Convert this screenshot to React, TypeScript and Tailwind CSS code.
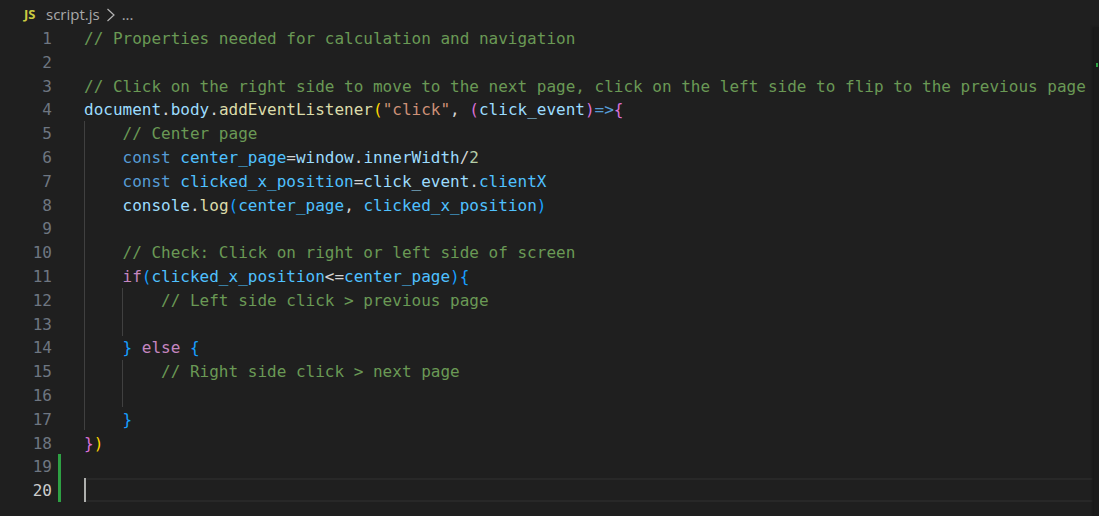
import type { ReactNode } from 'react';

const c = 'text-[#6a9955]';
const v = 'text-[#9cdcfe]';
const k = 'text-[#4fc1ff]';
const f = 'text-[#dcdcaa]';
const b = 'text-[#569cd6]';
const p = 'text-[#c586c0]';
const w = 'text-[#d4d4d4]';
const gold = 'text-[#ffd700]';
const orchid = 'text-[#da70d6]';
const blue = 'text-[#179fff]';

type Token = [string, string];

const lines: Token[][] = [
  [[c, '// Properties needed for calculation and navigation']],
  [],
  [[c, '// Click on the right side to move to the next page, click on the left side to flip to the previous page']],
  [
    [v, 'document'], [w, '.'], [v, 'body'], [w, '.'], [f, 'addEventListener'], [gold, '('],
    ['text-[#ce9178]', '"click"'], [w, ', '], [orchid, '('], [v, 'click_event'], [orchid, ')'], [b, '=>'], [orchid, '{'],
  ],
  [[w, '    '], [c, '// Center page']],
  [
    [w, '    '], [b, 'const '], [k, 'center_page'], [w, '='], [v, 'window'], [w, '.'], [v, 'innerWidth'], [w, '/'],
    ['text-[#b5cea8]', '2'],
  ],
  [[w, '    '], [b, 'const '], [k, 'clicked_x_position'], [w, '='], [v, 'click_event'], [w, '.'], [k, 'clientX']],
  [
    [w, '    '], [v, 'console'], [w, '.'], [f, 'log'], [blue, '('], [k, 'center_page'], [w, ', '],
    [k, 'clicked_x_position'], [blue, ')'],
  ],
  [],
  [[w, '    '], [c, '// Check: Click on right or left side of screen']],
  [[w, '    '], [p, 'if'], [blue, '('], [k, 'clicked_x_position'], [w, '<='], [k, 'center_page'], [blue, ')'], [blue, '{']],
  [[w, '        '], [c, '// Left side click > previous page']],
  [],
  [[w, '    '], [blue, '}'], [w, ' '], [p, 'else'], [w, ' '], [blue, '{']],
  [[w, '        '], [c, '// Right side click > next page']],
  [],
  [[w, '    '], [blue, '}']],
  [[orchid, '}'], [gold, ')']],
  [],
  [],
];

function Guide({ className }: { className: string }) {
  return <div className={`absolute w-px bg-[#404040] ${className}`} />;
}

function CodeLine({ tokens, num, active, changed }: { tokens: Token[]; num: number; active: boolean; changed: boolean }): ReactNode {
  return (
    <div className="flex h-[23.8px] leading-[25.2px]">
      <div className={`w-[52px] shrink-0 text-right ${active ? 'text-[#cccccc]' : 'text-[#6e7681]'}`}>{num}</div>
      <div className="w-[6px] shrink-0" />
      <div className={`w-[3px] shrink-0 ${changed ? 'bg-[#2ea043]' : ''}`} />
      <div className="w-[23px] shrink-0" />
      <div className={`relative flex-1 whitespace-pre ${active ? 'border-y-2 border-[#282828] leading-[21.2px]' : ''}`}>
        {tokens.map(([cls, text], i) => (
          <span key={i} className={cls}>
            {text}
          </span>
        ))}
        {active && <div className="absolute left-0 -top-[2px] h-[24px] w-[2px] bg-[#aeafad]" />}
      </div>
    </div>
  );
}

export default function App() {
  return (
    <div className="h-[516px] w-[1099px] overflow-hidden bg-[#1f1f1f]">
      {/* Breadcrumb */}
      <div className="flex h-[26px] items-center pl-[24px] pt-[3px] font-['Open_Sans',sans-serif] text-[15px] text-[#a9a9a9]">
        <span className="mr-[9px] w-[13px] text-[13px] font-bold text-[#cbcb41]">JS</span>
        <span>script.js</span>
        <svg width="14" height="16" viewBox="0 0 14 16" className="ml-[4px]" fill="none" stroke="#b4b4b4" strokeWidth="1.2">
          <path d="M3.5 2 10 8l-6.5 6" />
        </svg>
        <span className="ml-[4px]">...</span>
      </div>

      {/* Editor */}
      <div className="relative font-['DejaVu_Sans_Mono',monospace] text-[16px]">
        {lines.map((tokens, i) => (
          <CodeLine key={i} tokens={tokens} num={i + 1} active={i === 19} changed={i >= 18} />
        ))}
        <Guide className="left-[84px] top-[95px] h-[309px]" />
        <Guide className="left-[122px] top-[262px] h-[48px]" />
        <Guide className="left-[122px] top-[334px] h-[47px]" />

        {/* Scrollbar with git change mark */}
        <div className="absolute right-0 top-[1px] h-[490px] w-[5px] bg-[#1a1a1a] shadow-[-2px_0_2px_#191919]">
          <div className="absolute left-[2px] top-[36px] h-[4px] w-[2px] bg-[#2ea043]" />
        </div>
      </div>
    </div>
  );
}
